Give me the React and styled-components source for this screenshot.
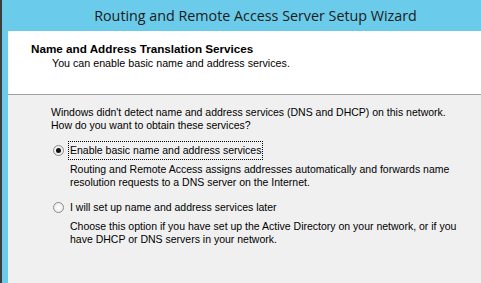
import styled, { createGlobalStyle } from "styled-components"

const Global = createGlobalStyle`
  html, body { margin: 0; padding: 0; background: #6bcbea; }
  body { font-family: "Liberation Sans", Arial, sans-serif; }
`

const Window = styled.div`
  width: 481px;
  height: 283px;
  display: flex;
  flex-direction: column;
  background: #6bcbea;
  border-left: 2px solid #3c3c3c;
  box-sizing: border-box;
  overflow: hidden;
`

const TitleBar = styled.div`
  height: 31px;
  flex: none;
  display: flex;
  align-items: center;
  justify-content: center;
  padding-left: 28px;
  font-family: "Open Sans", "Liberation Sans", sans-serif;
  font-size: 14.3px;
  color: #1b1b1b;
`

const Client = styled.div`
  flex: 1;
  margin-left: 6px;
  display: flex;
  flex-direction: column;
  background: #f0f0f0;
`

const Header = styled.div`
  height: 64px;
  flex: none;
  background: #fff;
  border-bottom: 1px solid #a0a0a0;
  box-sizing: border-box;
  padding: 11px 0 0 23px;
`

const Heading = styled.div`
  font-weight: bold;
  font-size: 11.7px;
  color: #000;
  line-height: 14px;
`

const Sub = styled.div`
  font-size: 10.7px;
  line-height: 14px;
  padding-left: 21px;
  color: #000;
`

const Body = styled.div`
  padding: 11px 0 0 43px;
  font-size: 10.5px;
  line-height: 13px;
  color: #000;
`

const Para = styled.p`
  margin: 0 0 ${p => p.$gap || 0}px;
  padding-left: ${p => p.$indent || 0}px;
`

const Option = styled.div`
  display: flex;
  align-items: center;
  gap: 5px;
  margin-bottom: 4px;
`

const Radio = styled.span`
  width: 11px;
  height: 11px;
  border-radius: 50%;
  box-sizing: border-box;
  border: 1px solid #8a8a8a;
  background: radial-gradient(circle, #fff 0%, #e6e6e6 100%);
  display: flex;
  align-items: center;
  justify-content: center;
  margin-left: 2px;
  &::after {
    content: "";
    width: 5px;
    height: 5px;
    border-radius: 50%;
    background: ${p => (p.$checked ? "#111" : "transparent")};
  }
`

const Label = styled.span`
  padding: 2px 1px;
  outline: ${p => (p.$focus ? "1px dotted #000" : "none")};
`

export default function App() {
  return (
    <>
      <Global />
      <Window>
        <TitleBar>Routing and Remote Access Server Setup Wizard</TitleBar>
        <Client>
          <Header>
            <Heading>Name and Address Translation Services</Heading>
            <Sub>You can enable basic name and address services.</Sub>
          </Header>
          <Body>
            <Para $gap={10}>
              Windows didn't detect name and address services (DNS and DHCP) on this network.
              <br />
              How do you want to obtain these services?
            </Para>
            <Option>
              <Radio $checked />
              <Label $focus>Enable basic name and address services</Label>
            </Option>
            <Para $indent={19} $gap={10}>
              Routing and Remote Access assigns addresses automatically and forwards name
              <br />
              resolution requests to a DNS server on the Internet.
            </Para>
            <Option>
              <Radio />
              <Label>I will set up name and address services later</Label>
            </Option>
            <Para $indent={19}>
              Choose this option if you have set up the Active Directory on your network, or if you
              <br />
              have DHCP or DNS servers in your network.
            </Para>
          </Body>
        </Client>
      </Window>
    </>
  )
}
